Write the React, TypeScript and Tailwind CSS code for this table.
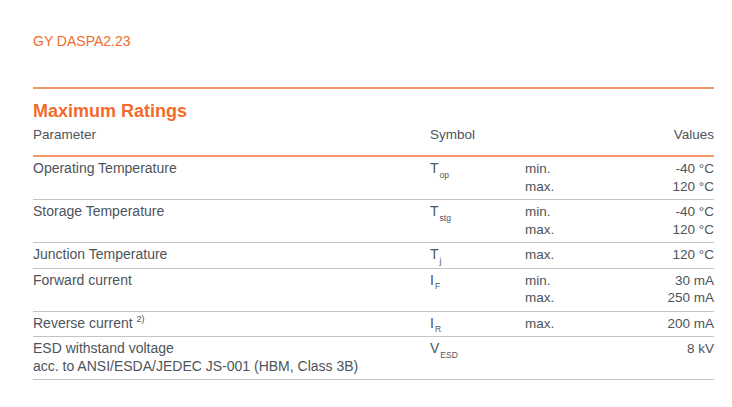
import React from "react";

type Line = { label?: string; value: string };

interface Rating {
  parameter: React.ReactNode;
  symbol: string;
  sub: string;
  lines: Line[];
}

const ratings: Rating[] = [
  {
    parameter: "Operating Temperature",
    symbol: "T",
    sub: "op",
    lines: [
      { label: "min.", value: "-40 °C" },
      { label: "max.", value: "120 °C" },
    ],
  },
  {
    parameter: "Storage Temperature",
    symbol: "T",
    sub: "stg",
    lines: [
      { label: "min.", value: "-40 °C" },
      { label: "max.", value: "120 °C" },
    ],
  },
  {
    parameter: "Junction Temperature",
    symbol: "T",
    sub: "j",
    lines: [{ label: "max.", value: "120 °C" }],
  },
  {
    parameter: "Forward current",
    symbol: "I",
    sub: "F",
    lines: [
      { label: "min.", value: "30 mA" },
      { label: "max.", value: "250 mA" },
    ],
  },
  {
    parameter: (
      <>
        Reverse current{" "}
        <span className="relative -top-[4px] align-top text-[9px] leading-[17.5px]">2)</span>
      </>
    ),
    symbol: "I",
    sub: "R",
    lines: [{ label: "max.", value: "200 mA" }],
  },
  {
    parameter: (
      <>
        ESD withstand voltage
        <br />
        acc. to ANSI/ESDA/JEDEC JS-001 (HBM, Class 3B)
      </>
    ),
    symbol: "V",
    sub: "ESD",
    lines: [{ value: "8 kV" }],
  },
];

const Symbol = ({ symbol, sub }: { symbol: string; sub: string }) => (
  <span className="inline-flex items-end">
    <span>{symbol}</span>
    <span className="ml-[1px] translate-y-[2px] text-[8.5px] leading-[9px]">{sub}</span>
  </span>
);

export default function App() {
  return (
    <div
      className="min-h-[407px] w-[732px] bg-white text-[14px] leading-[17.5px] text-[#4d545b]"
      style={{ fontFamily: '"Liberation Sans", Arial, sans-serif' }}>
      <div className="ml-[33px] w-[681px] pt-[33px]">
        <div className="text-[#f26b2c]">GY DASPA2.23</div>

        <div className="mt-[36px] border-t-2 border-[#f5956a]" />

        <h2 className="mt-[12px] text-[18px] font-bold leading-[20px] text-[#f26b2c]">Maximum Ratings</h2>

        <div className="mt-[5px] grid grid-cols-[397px_95px_1fr] border-b-2 border-[#f5956a] pb-[12px] text-[13.5px]">
          <div>Parameter</div>
          <div>Symbol</div>
          <div className="text-right">Values</div>
        </div>

        {ratings.map((r, idx) => (
          <div
            key={idx}
            className="grid grid-cols-[397px_95px_1fr] border-b border-[#c4c4c4] pb-[4px] pt-[3px]">
            <div>{r.parameter}</div>
            <div>
              <Symbol symbol={r.symbol} sub={r.sub} />
            </div>
            <div className="flex flex-col text-[13.5px]">
              {r.lines.map((line, i) => (
                <div key={i} className="flex justify-between">
                  <span>{line.label}</span>
                  <span>{line.value}</span>
                </div>
              ))}
            </div>
          </div>
        ))}
      </div>
    </div>
  );
}
